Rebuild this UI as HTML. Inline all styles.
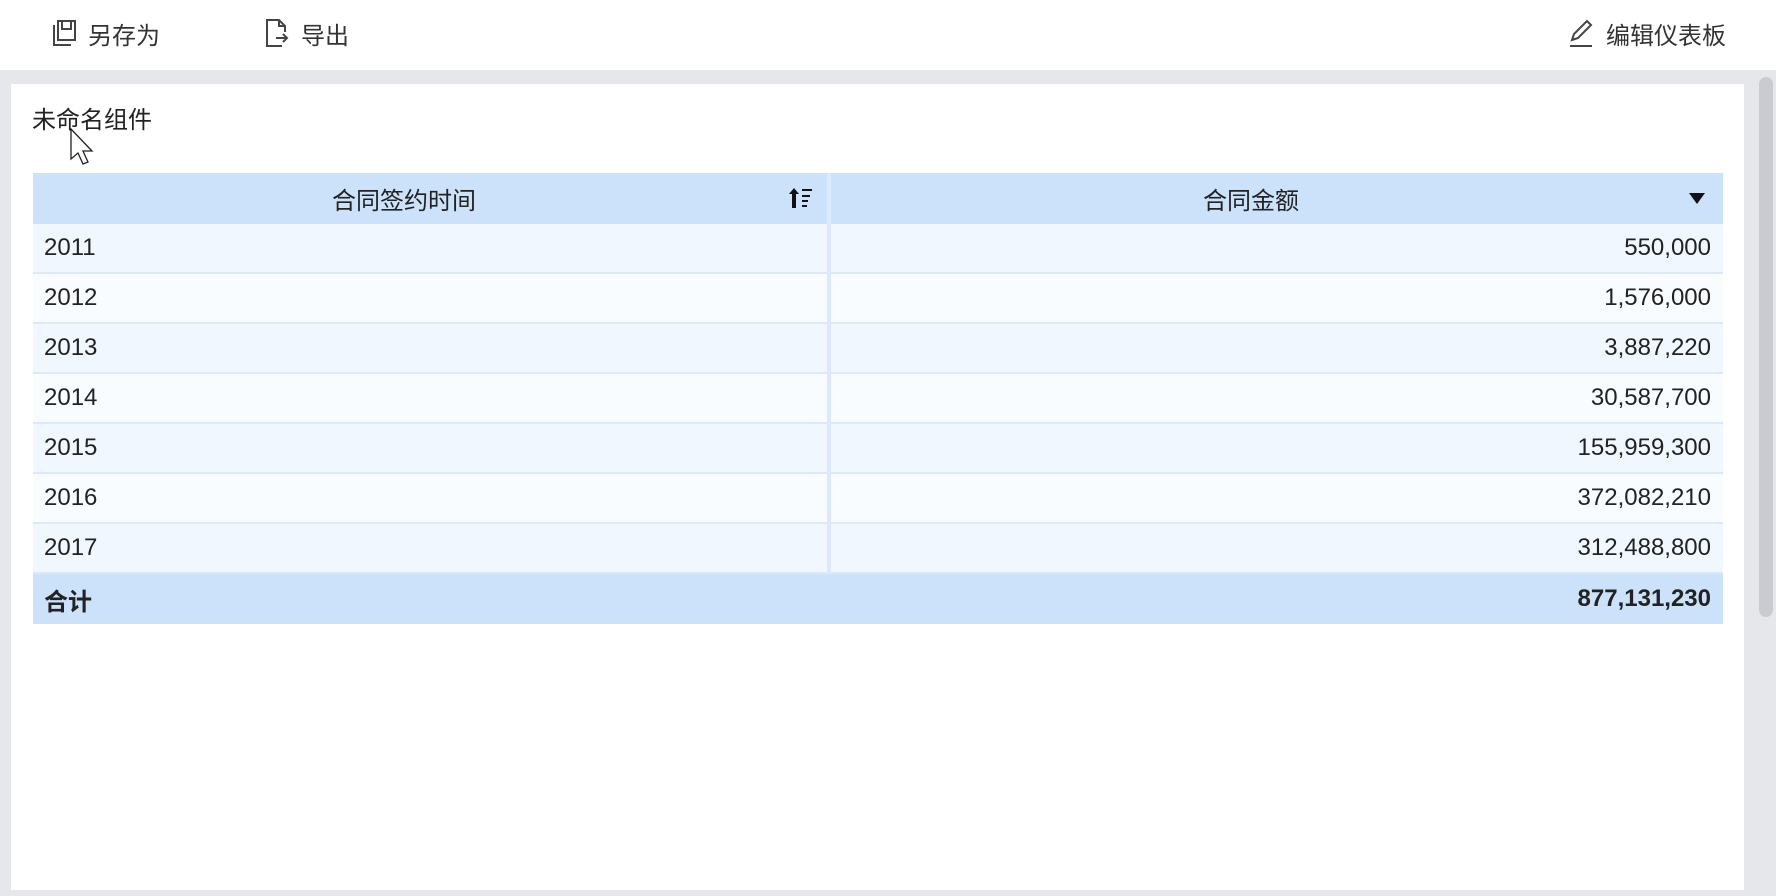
<!DOCTYPE html>
<html><head><meta charset="utf-8"><style>
*{margin:0;padding:0;box-sizing:border-box}
body{width:1776px;height:896px;overflow:hidden;background:#e6e7ea;font-family:"Liberation Sans","Noto Sans CJK SC",sans-serif;color:#222;position:relative}
.tb{position:absolute;left:0;top:0;width:1776px;height:70px;background:#fff}
.tb .it{position:absolute;top:16px;font-size:24px;color:#333;display:flex;align-items:center;height:34px}
.tb svg{margin-right:11px}
.panel{position:absolute;left:11px;top:84px;width:1733px;height:806px;background:#fff}
.title{position:absolute;left:32px;top:100px;font-size:24px;color:#222}
.sb{position:absolute;left:1759px;top:77px;width:14px;height:540px;background:#c9cbd0;border-radius:7px}
.tbl{position:absolute;left:33px;top:173px;width:1690px}
.row{height:50px;display:flex;font-size:24px;align-items:stretch}
.c1{width:794px;display:flex;align-items:center;padding-left:11px}
.gap{width:4px;background:#dbe9fb}
.c2{flex:1;display:flex;align-items:center;justify-content:flex-end;padding-right:12px}
.hd{background:#cce1fa;height:51px}
.hd .c1,.hd .c2{justify-content:center;position:relative;padding:0 52px 0 0}
.a{background:#f1f7fe;border-bottom:2px solid #dde9fa}
.b{background:#f9fcff;border-bottom:2px solid #dde9fa}
.tot{background:#cce1fa;font-weight:bold}
</style></head><body>
<div class="tb">
 <div class="it" style="left:51px"><svg width="26" height="28" viewBox="0 0 26 28" fill="none" stroke="#444" stroke-width="2"><path d="M7 2h17v19H7z"/><path d="M11 2v8h9V2"/><path d="M3 6v20h17"/></svg>另存为</div>
 <div class="it" style="left:264px"><svg width="26" height="30" viewBox="0 0 26 30" fill="none" stroke="#444" stroke-width="2"><path d="M18 28H3V2h12l6 6v6"/><path d="M15 2v6h6"/><path d="M12 20h11M19 16l4 4-4 4"/></svg>导出</div>
 <div class="it" style="left:1568px"><svg width="27" height="30" viewBox="0 0 27 30" fill="none" stroke="#444" stroke-width="2"><path d="M4 22l2-6L19 3l4 4L10 20z"/><path d="M2 28h22"/></svg>编辑仪表板</div>
</div>
<div class="panel"></div>
<div class="sb"></div>
<div class="title">未命名组件</div>
<svg style="position:absolute;left:70px;top:128px" width="26" height="42" viewBox="0 0 26 42"><path d="M1 1v30l7-6 5 11 5-2-5-11h9z" fill="#fff" stroke="#222" stroke-width="1.3"/></svg>
<div class="tbl">
 <div class="row hd"><div class="c1">合同签约时间<svg style="position:absolute;right:14px;top:15px" width="24" height="20" viewBox="0 0 24 20" fill="#111"><path d="M5 0l5 6H7v14H3V6H0z"/><rect x="13" y="1" width="10" height="2"/><rect x="13" y="7" width="8" height="2"/><rect x="13" y="12" width="6" height="2"/><rect x="13" y="17" width="5" height="2"/></svg></div><div class="gap"></div><div class="c2">合同金额<svg style="position:absolute;right:18px;top:20px" width="16" height="11" viewBox="0 0 16 11"><path d="M0 0h16L8 11z" fill="#111"/></svg></div></div>
 <div class="row a"><div class="c1">2011</div><div class="gap"></div><div class="c2">550,000</div></div>
 <div class="row b"><div class="c1">2012</div><div class="gap"></div><div class="c2">1,576,000</div></div>
 <div class="row a"><div class="c1">2013</div><div class="gap"></div><div class="c2">3,887,220</div></div>
 <div class="row b"><div class="c1">2014</div><div class="gap"></div><div class="c2">30,587,700</div></div>
 <div class="row a"><div class="c1">2015</div><div class="gap"></div><div class="c2">155,959,300</div></div>
 <div class="row b"><div class="c1">2016</div><div class="gap"></div><div class="c2">372,082,210</div></div>
 <div class="row a"><div class="c1">2017</div><div class="gap"></div><div class="c2">312,488,800</div></div>
 <div class="row tot"><div class="c1">合计</div><div class="c2">877,131,230</div></div>
</div>
</body></html>
